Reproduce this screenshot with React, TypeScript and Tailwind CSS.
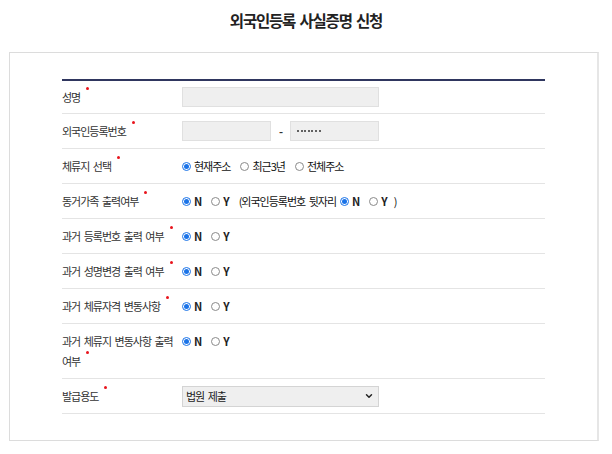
import React from 'react';
import { ChevronDown } from 'lucide-react';

const Required: React.FC = () => (
  <span className="ml-[6px] inline-block h-[3px] w-[3px] rounded-full bg-[#e8141c] align-top" />
);

const Radio: React.FC<{ checked?: boolean; label: string; bold?: boolean }> = ({ checked, label, bold }) => (
  <label className="mr-[10px] flex items-center gap-[3px]">
    {checked ? (
      <span className="flex h-[9px] w-[9px] items-center justify-center rounded-full border border-[#1a73e8] bg-white">
        <span className="h-[5px] w-[5px] rounded-full bg-[#1a73e8]" />
      </span>
    ) : (
      <span className="h-[9px] w-[9px] rounded-full border border-[#8a8a8a] bg-white" />
    )}
    <span className={bold ? 'font-bold text-[#222]' : 'text-[#111]'}>{label}</span>
  </label>
);

const YesNo: React.FC = () => (
  <>
    <Radio checked label="N" bold />
    <Radio label="Y" bold />
  </>
);

const Field: React.FC<{ className: string; masked?: boolean }> = ({ className, masked }) => (
  <div className={`flex h-[20px] items-center border border-[#e0e0e0] bg-[#efefef] px-[6px] ${className}`}>
    {masked && (
      <div className="flex gap-[1.6px]">
        {[0, 1, 2, 3, 4, 5, 6].map((d) => (
          <span key={d} className="h-[2px] w-[2px] rounded-full bg-[#333]" />
        ))}
      </div>
    )}
  </div>
);

type Row = { label: string; content: React.ReactNode };

const rows: Row[] = [
  { label: '성명', content: <Field className="w-[197px]" /> },
  {
    label: '외국인등록번호',
    content: (
      <>
        <Field className="w-[89px]" />
        <span className="w-[19px] text-center font-bold text-[#333]">-</span>
        <Field className="w-[89px]" masked />
      </>
    ),
  },
  {
    label: '체류지 선택',
    content: (
      <>
        <Radio checked label="현재주소" />
        <Radio label="최근3년" />
        <Radio label="전체주소" />
      </>
    ),
  },
  {
    label: '동거가족 출력여부',
    content: (
      <>
        <YesNo />
        <span className="mr-[4px] text-[#111]">(외국인등록번호 뒷자리</span>
        <YesNo />
        <span className="-ml-[3px] text-[#111]">)</span>
      </>
    ),
  },
  { label: '과거 등록번호 출력 여부', content: <YesNo /> },
  { label: '과거 성명변경 출력 여부', content: <YesNo /> },
  { label: '과거 체류자격 변동사항', content: <YesNo /> },
  { label: '과거 체류지 변동사항 출력 여부', content: <YesNo /> },
  {
    label: '발급용도',
    content: (
      <div className="flex h-[21px] w-[197px] items-center justify-between border border-[#d4d4d4] bg-[#efefef] pl-[3px] pr-[4px] text-[#222]">
        <span>법원 제출</span>
        <ChevronDown size={10} strokeWidth={3.5} className="text-[#222]" />
      </div>
    ),
  },
];

export default function App() {
  return (
    <div className="min-h-screen bg-white font-['Noto_Sans_CJK_KR','Noto_Sans',sans-serif] text-[11px] tracking-[-1px] text-[#333] [word-spacing:2px]">
      <h1 className="pt-[10px] text-center text-[15.5px] font-bold leading-[20px] tracking-[-1.2px] text-[#222]">
        외국인등록 사실증명 신청
      </h1>
      <div className="ml-[9px] mt-[22px] w-[590px] border border-[#dcdcdc] border-r-2 border-r-[#e6e6e6] px-[52px] pb-[26px] pt-[26px]">
        <div className="border-t-2 border-[#2f365f]">
          {rows.map((row, i) => (
            <div
              key={row.label}
              className={`flex border-b border-[#e4e4e4] ${i === 0 ? 'py-[6px]' : 'py-[7px]'}`}
            >
              <div className="w-[120px] shrink-0 break-keep pr-2 leading-[20px]">
                {row.label}
                <Required />
              </div>
              <div className="flex h-[20px] items-center leading-[20px]">{row.content}</div>
            </div>
          ))}
        </div>
      </div>
    </div>
  );
}
